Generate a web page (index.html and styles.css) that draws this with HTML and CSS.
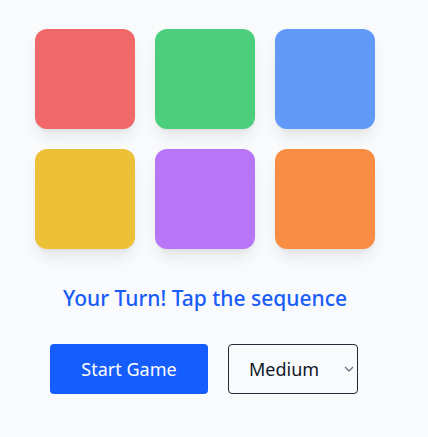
FILE: index.html
```html
<!DOCTYPE html>
<html lang="en">
<head>
  <meta charset="UTF-8" />
  <title>Simon Says</title>
  <meta name="viewport" content="width=device-width, initial-scale=1.0" />
  <link rel="stylesheet" href="styles.css">
</head>
<body>
  <div class="game">
    <div class="board">
      <div class="tile red"></div>
      <div class="tile green"></div>
      <div class="tile blue"></div>
      <div class="tile yellow"></div>
      <div class="tile purple"></div>
      <div class="tile orange"></div>
    </div>

    <p class="status">Your Turn! Tap the sequence</p>

    <div class="controls">
      <button class="start-btn">Start Game</button>
      <span class="select-wrap">
        <select class="level-select">
          <option>Easy</option>
          <option selected>Medium</option>
          <option>Hard</option>
        </select>
        <!-- dropdown chevron -->
        <svg class="chevron" width="10" height="6" viewBox="0 0 10 6">
          <path d="M1 1 L5 5 L9 1" fill="none" stroke="#6b7280" stroke-width="1.3" />
        </svg>
      </span>
    </div>
  </div>
</body>
</html>
```

FILE: styles.css
```css
body {
  margin: 0;
  padding: 0;
  background: #f8fafc;
  font-family: 'Noto Sans', 'Open Sans', sans-serif;
}

.game {
  width: 410px;
  padding-top: 29px;
  display: flex;
  flex-direction: column;
  align-items: center;
}

.board {
  display: grid;
  grid-template-columns: repeat(3, 100px);
  gap: 20px;
}

.tile {
  width: 100px;
  height: 100px;
  border-radius: 12px;
  opacity: 0.8;
  box-shadow: 0 10px 15px -3px rgba(0, 0, 0, 0.1), 0 4px 6px -4px rgba(0, 0, 0, 0.1);
}

.red { background: #ef4444; }
.green { background: #22c55e; }
.blue { background: #3b82f6; }
.yellow { background: #eab308; }
.purple { background: #a855f7; }
.orange { background: #f97316; }

.status {
  margin: 35px 0 32px;
  font-size: 21px;
  line-height: 28px;
  font-weight: 500;
  color: #1a5cf7;
}

.controls {
  display: flex;
  gap: 20px;
  margin-right: 2px;
}

.start-btn {
  width: 158px;
  height: 50px;
  background: #155dfc;
  color: white;
  border: none;
  border-radius: 4px;
  font-family: inherit;
  font-size: 18px;
  cursor: pointer;
}

.select-wrap {
  position: relative;
  display: flex;
}

.level-select {
  width: 130px;
  height: 50px;
  padding: 0 8px 0 20px;
  appearance: none;
  background: transparent;
  color: #111827;
  border: 1px solid #1f2937;
  border-radius: 4px;
  font-family: inherit;
  font-size: 18px;
}

.chevron {
  position: absolute;
  right: 4px;
  top: 22px;
  pointer-events: none;
}
```
